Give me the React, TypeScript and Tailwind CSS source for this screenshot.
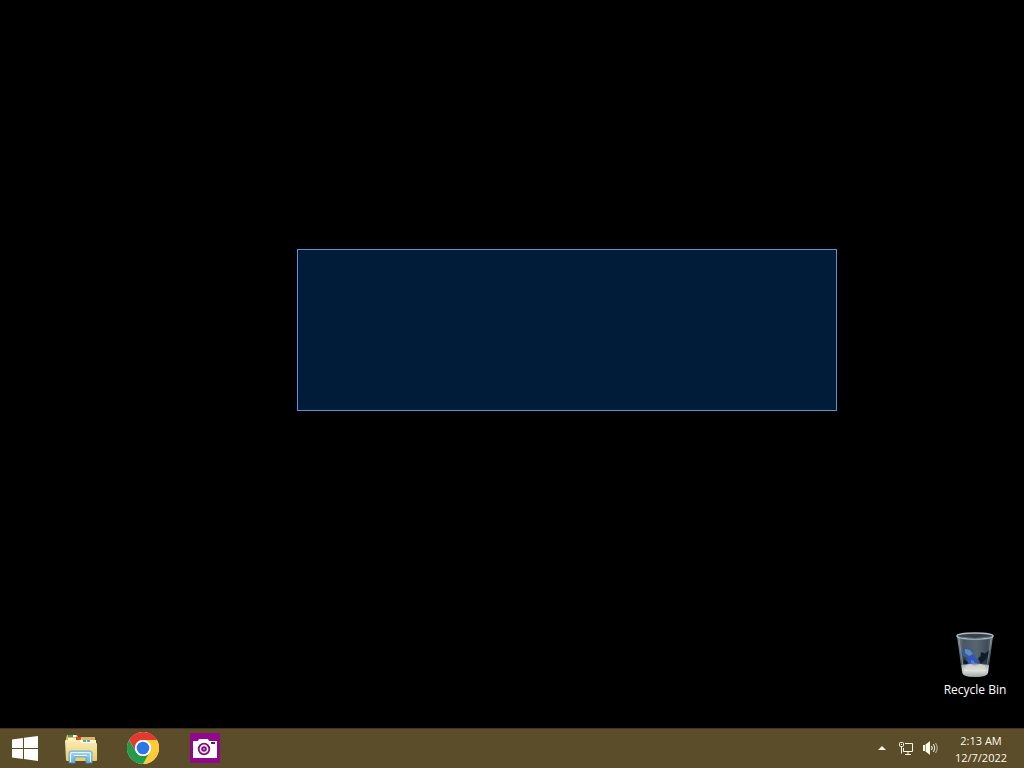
import React from "react";

function WindowsLogo() {
  return (
    <svg viewBox="0 0 26 25" className="h-[25px] w-[26px]" fill="#fffefa" aria-hidden="true">
      <path d="M0 3.6 11 2v10H0zM12 1.8 26 0v12H12zM0 13h11v10L0 21.6zM12 13h14v12l-14-1.9z" />
    </svg>
  );
}

function ExplorerIcon() {
  return (
    <svg viewBox="0 0 32 32" className="size-8" aria-hidden="true">
      <defs>
        <linearGradient id="folder" x1="0" y1="0" x2="0" y2="1">
          <stop offset="0" stopColor="#f9edb4" />
          <stop offset="1" stopColor="#e9cb72" />
        </linearGradient>
        <linearGradient id="stand" x1="0" y1="0" x2="0" y2="1">
          <stop offset="0" stopColor="#a5d8f1" />
          <stop offset="1" stopColor="#62b0df" />
        </linearGradient>
      </defs>
      <path d="M1 6 2 3h10l1 2h17v23H1z" fill="#d9b967" />
      <path d="M3 3h8v2H3z" fill="#fff8dc" />
      <path d="M3 3h5v2H3z" fill="#35a650" />
      <path d="M3 6h13l1 2h14v4H3z" fill="#fff5cd" />
      <path d="M11 5h5v3h-5z" fill="#d9482f" />
      <path d="M0 9q0-1 1-1h13l2 3h15q1 0 1 1v16q0 1-1 1H2q-1 0-1-1z" fill="url(#folder)" />
      <path d="M15 8h10v3h-8z" fill="#fffdf0" />
      <path d="M18 8h3v2h-3z" fill="#60a970" />
      <path d="M22 8h3v2h-3z" fill="#5ba4cd" />
      <path d="M4 31V21q0-2 2-2h19q2 0 2 2v10h-6v-6H10v6z" fill="url(#stand)" stroke="#4c9ccd" strokeWidth=".7" />
      <path d="M5.500 30v-8q0-1.500 1.500-1.500h17q1.500 0 1.500 1.500v8M9 23.500h13" fill="none" stroke="#e3f5fd" strokeWidth="1.200" />
    </svg>
  );
}

function ChromeIcon() {
  return (
    <svg viewBox="0 0 32 32" className="size-8" aria-hidden="true">
      <circle cx="16" cy="16" r="16" fill="#fff" />
      <path d="M2.14 8A16 16 0 0 1 29.86 8H16A8 8 0 0 0 9.07 20z" fill="#e23b2e" />
      <path d="M29.86 8A16 16 0 0 1 16 32l6.93-12A8 8 0 0 0 16 8z" fill="#fccb35" />
      <path d="M16 32A16 16 0 0 1 2.14 8l6.93 12A8 8 0 0 0 22.93 20z" fill="#249b4a" />
      <circle cx="16" cy="16" r="8" fill="#fff" />
      <circle cx="16" cy="16" r="6.3" fill="#2d76e5" />
    </svg>
  );
}

function CameraIcon() {
  return (
    <svg viewBox="0 0 30 30" className="size-[30px]" aria-hidden="true">
      <path d="M0 0h30v30H0z" fill="#93078e" />
      <path d="M3 8h5l1-2h9l1 2h8v17H3z" fill="#fff" />
      <path d="M21 9h4v2h-4z" fill="#55205b" />
      <circle cx="14" cy="16" r="5.3" fill="none" stroke="#850d82" strokeWidth="1.8" />
      <circle cx="14" cy="16" r="2.8" fill="#850d82" />
      <path d="M13 15h2v2h-2z" fill="#b277b2" />
    </svg>
  );
}

function NetworkIcon() {
  return (
    <svg viewBox="0 0 16 16" className="size-4" fill="none" stroke="#fff9e8" aria-hidden="true">
      <path d="M7 3.500h7.500v8H5.500M10 12v2M7 14.500h6M3.500 6v7.500" />
      <path d="M5.500 8v3.500" />
      <rect x="1.500" y="2.500" width="4" height="4" rx="1" />
      <path d="M3 4h1v1H3z" fill="#fff9e8" stroke="none" />
    </svg>
  );
}

function SpeakerIcon() {
  return (
    <svg viewBox="0 0 16 16" className="size-4" fill="none" stroke="#fff9e8" aria-hidden="true">
      <path d="M1 5h2l5-4v14l-5-4H1z" fill="#fff9e8" stroke="none" />
      <path d="M3.500 5v6" stroke="#75694b" strokeWidth=".7" />
      <path d="M9.500 6q1.500 2 0 4" strokeWidth="1.200" />
      <path d="M11.500 4q2.600 4 0 8" />
      <path d="M13.500 3q3.500 5 0 10" opacity=".65" />
    </svg>
  );
}

function RecycleBinIcon() {
  return (
    <svg viewBox="0 0 38 46" className="h-[46px] w-[38px]" aria-hidden="true">
      <defs>
        <linearGradient id="glass">
          <stop offset="0" stopColor="#87929a" />
          <stop offset=".18" stopColor="#35434e" />
          <stop offset=".55" stopColor="#4b5963" />
          <stop offset=".85" stopColor="#24303a" />
          <stop offset="1" stopColor="#8d989f" />
        </linearGradient>
        <linearGradient id="base" x1="0" y1="0" x2="0" y2="1">
          <stop offset="0" stopColor="#929a9e" />
          <stop offset=".5" stopColor="#e3e4df" />
          <stop offset="1" stopColor="#9ca2a4" />
        </linearGradient>
      </defs>
      <path d="M1 4h36l-5 37q-1 4-13 4T6 41z" fill="url(#glass)" />
      <path d="M4 6h30l-2 14-12 8-8-10-7 2z" fill="#687984" opacity=".4" />
      <path d="m6 18 6-2 5 2 1 6-4 3-7-3z" fill="#365e9c" />
      <path d="m9 17 5 1 3 4-4 2-4-3z" fill="#6289bb" />
      <path d="m13 25 5-2 4 6-3 5-6-2-3-4z" fill="#3154bd" />
      <path d="m15 28 3 1 1 3-4-1z" fill="#567be2" />
      <path d="m8 27 4 3-1 4-4-3zM22 26l12-8-3 8-6 6zM25 20l5 2-6 7z" fill="#101c29" />
      <path d="M5.500 33q13-3 27.500 0l-1 8q-1 4-13 4T6.500 41z" fill="url(#base)" />
      <path d="m9 34 5-2 5 2 5-2 6 2-3 4H12z" fill="#d7d8d4" opacity=".8" />
      <path d="m3 7 5 34M35 7l-5 34" stroke="#aeb9c0" strokeWidth=".7" opacity=".7" />
      <ellipse cx="19" cy="4" rx="18" ry="3" fill="#36434c" stroke="#adb8bf" strokeWidth="1.500" />
      <path d="M4 5q15 3 30 0" stroke="#65757f" fill="none" />
    </svg>
  );
}

export default function App() {
  return (
    <div className="flex h-screen flex-col overflow-hidden bg-black font-['Open_Sans','Noto_Sans',sans-serif] text-xs text-white">
      <main className="relative flex flex-1 items-end justify-end px-2 pb-[30px]">
        <div className="absolute top-[249px] left-[297px] h-[162px] w-[540px] border border-[#638ed1] bg-[#001c38]" />
        <button type="button" className="flex w-[82px] flex-col items-center gap-1">
          <RecycleBinIcon />
          <span className="text-xs leading-4 whitespace-nowrap">Recycle Bin</span>
        </button>
      </main>
      <footer className="flex h-10 shrink-0 items-stretch justify-between border-t border-[#40351c] bg-[#5b4d29] pb-px">
        <nav aria-label="Taskbar" className="flex items-stretch">
          <button type="button" aria-label="Start" className="flex w-[50px] items-center justify-center">
            <WindowsLogo />
          </button>
          <button type="button" aria-label="File Explorer" className="flex w-[62px] items-center justify-center">
            <ExplorerIcon />
          </button>
          <button type="button" aria-label="Google Chrome" className="flex w-[62px] items-center justify-center">
            <ChromeIcon />
          </button>
          <button type="button" aria-label="Camera" className="flex w-[62px] items-center justify-center">
            <CameraIcon />
          </button>
        </nav>
        <div className="flex items-center pr-3 text-[#fff9e8]">
          <button type="button" aria-label="Show hidden icons" className="flex w-6 justify-center">
            <svg viewBox="0 0 8 4" className="h-1 w-2" fill="currentColor" aria-hidden="true">
              <path d="m4 0 4 4H0z" />
            </svg>
          </button>
          <button type="button" aria-label="Network" className="flex w-6 justify-center">
            <NetworkIcon />
          </button>
          <button type="button" aria-label="Volume" className="flex w-6 justify-center">
            <SpeakerIcon />
          </button>
          <button type="button" className="ml-2 flex w-[62px] flex-col items-center pt-0.5 text-[11px] leading-[17px]">
            <span>2:13 AM</span>
            <span>12/7/2022</span>
          </button>
        </div>
      </footer>
    </div>
  );
}
